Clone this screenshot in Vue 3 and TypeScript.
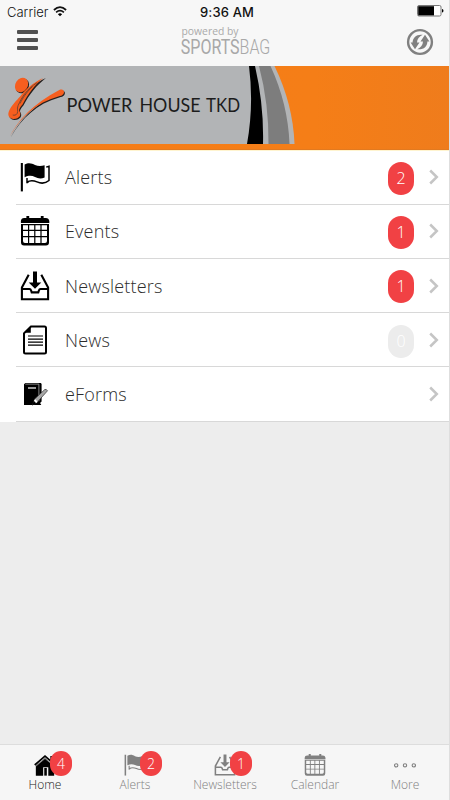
<script setup lang="ts">
interface MenuItem {
  label: string
  icon: string
  count: number | null
}
interface Tab {
  label: string
  icon: string
  count: number
  active?: boolean
}

const menu: MenuItem[] = [
  { label: 'Alerts', icon: 'flag', count: 2 },
  { label: 'Events', icon: 'calendar', count: 1 },
  { label: 'Newsletters', icon: 'inbox', count: 1 },
  { label: 'News', icon: 'page', count: 0 },
  { label: 'eForms', icon: 'form', count: null },
]
const tabs: Tab[] = [
  { label: 'Home', icon: 'home', count: 4, active: true },
  { label: 'Alerts', icon: 'flag', count: 2 },
  { label: 'Newsletters', icon: 'inbox', count: 1 },
  { label: 'Calendar', icon: 'calendar', count: 0 },
  { label: 'More', icon: 'more', count: 0 },
]
</script>

<template>
  <div class="screen">
    <svg class="sprite" width="0" height="0" aria-hidden="true">
      <symbol id="flag" viewBox="0 0 30 30">
        <path d="M.8 1h2.100v28.400H.8z" />
        <path d="M4.600 2.400C9 .1 12 1.500 15 2.900s6 1.500 9.600.3v12.400c-3.600 1.400-6.600 1-9.600-.5S9 13.200 4.600 15.300z" />
        <path d="M26.200 5.100l2.800-.8v14.200c-3.800 3.200-8 3.200-12 1.400-4-1.800-6.500-2-10 .2v-4.200M7 20.800l2-1.600" fill="none" stroke="currentColor" stroke-width="1.500" />
      </symbol>
      <symbol id="calendar" viewBox="0 0 30 30">
        <path d="M6.400 0h2.800v2h11.600V0h2.800v2h2.200q3 0 3.500 3v2H.9V5q.3-3 3.300-3h2.200z" />
        <path fill-rule="evenodd" d="M1 8h28v18.500q0 3-3 3H4q-3 0-3-3zM3 9.300v4.500h5V9.300zm6.200 0v4.500h5V9.300zm6.200 0v4.500h5V9.300zm6.200 0v4.500H27V9.300zM3 15v5h5v-5zm6.200 0v5h5v-5zm6.200 0v5h5v-5zm6.200 0v5H27v-5zM3 21.200V25q0 2 2 2h3v-5.800zm6.200 0V27h5v-5.800zm6.200 0V27h5v-5.800zm6.200 0V27H25q2 0 2-2v-3.800z" />
      </symbol>
      <symbol id="inbox" viewBox="0 0 30 30">
        <path d="M8.700 3.800L1.900 16.400v11.900h26.200V16.400L21.300 3.800M2 18h7.500q1.100 0 1.600 1.500l.6 1.900h6.600l.6-1.900q.5-1.500 1.600-1.500H28" fill="none" stroke="currentColor" stroke-width="2.100" />
        <path d="M13 .6h4v10.800h4.300L15 17.800l-6.300-6.400H13z" />
      </symbol>
      <symbol id="page" viewBox="0 0 30 30">
        <path d="M11 1.500h13.500q1.500 0 1.500 1.500v24q0 1.500-1.500 1.500h-19Q4 28.500 4 27V8.300z" fill="none" stroke="currentColor" stroke-width="2" />
        <path d="M10.800.8v7H3.500zM8 10.400h15v1.200H8zM8 13.500h15v1.200H8zM8 16.500h15v1.200H8zM8 19.500h15v1.200H8z" />
      </symbol>
      <symbol id="form" viewBox="0 0 30 30">
        <path d="M5.400 4h15.400l.8 1v17.500L18 26H4V5.200z" />
        <path d="M5.300 5.100h13.600v17" fill="none" stroke="#aaa" stroke-width=".8" />
        <path d="M8 9h8" stroke="#fff" stroke-width="1.200" />
        <path d="M12.600 25.900l2-5.800L24.800 10.500q1.500-.7 2.700 1.300L17 23.500z" fill="#a6a6a6" stroke="#333" stroke-width=".7" />
        <path d="M12.200 26.400l1.600-4.500 2.400 2.400zM17.500 26l2-3 1.800 3z" />
        <path d="M14 21.500l1.200-1.300 2.400 2.600-1.300 1.200z" fill="#fff" />
      </symbol>
      <symbol id="home" viewBox="0 0 30 30">
        <path d="M2.500 16L15 5.500 27.500 16v13.500h-8V18h-7v11.500h-10z" />
        <path d="M1 15L15 3l14 12M23.500 2.700V10" fill="none" stroke="currentColor" stroke-width="2.400" />
        <path d="M14 19h3.500v10.500H14z" />
        <path d="M3 16.300L15 6.200l12 10.100" fill="none" stroke="#ddd" stroke-width=".7" />
      </symbol>
      <symbol id="more" viewBox="0 0 30 30">
        <g fill="none" stroke="currentColor" stroke-width="1.500"><circle cx="3" cy="15.500" r="2.300" /><circle cx="15" cy="15.500" r="2.300" /><circle cx="27" cy="15.500" r="2.300" /></g>
      </symbol>
      <symbol id="turn" viewBox="0 0 28 28">
        <path d="M4.600 14.600h2C6.700 9.500 10.500 6 16.800 6.800 13 8.600 11.200 11 11 14.600h2.500L9 21.200z" />
      </symbol>
    </svg>

    <header class="top">
      <div class="status">
        <div class="carrier">
          <span>Carrier</span>
          <svg width="14" height="11" viewBox="0 0 14 11"><path d="M.9 4Q7-1.600 13.100 4M3.100 6.300q3.900-3.500 7.800 0" fill="none" stroke="#111" stroke-width="1.700" /><path d="M4.900 8.200q2.100-1.700 4.200 0L7 10.300z" /></svg>
        </div>
        <div class="time">9:36 AM</div>
        <svg class="battery" width="27" height="12" viewBox="0 0 27 12"><rect x=".5" y=".5" width="23.500" height="10.500" rx="1.500" fill="#fff" stroke="#777" /><path d="M1.200 1.200H17v9.200H1.200z" /><path d="M25 4q1.500 0 1.500 1.800T25 7.500z" /></svg>
      </div>
      <div class="nav">
        <button class="burger" aria-label="Menu"><i></i><i></i><i></i></button>
        <svg class="brand" width="92" height="36" viewBox="0 0 92 36">
          <text class="powered" x="1.500" y="10.800" textLength="57" lengthAdjust="spacingAndGlyphs">powered by</text>
          <text class="sports" x=".8" y="29.800" textLength="89.500" lengthAdjust="spacingAndGlyphs">SPORTS<tspan class="bag">BAG</tspan></text>
        </svg>
        <svg class="refresh" width="28" height="28" viewBox="0 0 28 28">
          <circle cx="14" cy="14" r="11.900" fill="none" stroke="#808080" stroke-width="2.400" />
          <use href="#turn" width="28" height="28" />
          <use href="#turn" width="28" height="28" transform="rotate(180 14 14)" />
        </svg>
      </div>
    </header>

    <svg class="banner" width="449" height="84" viewBox="0 0 449 84">
      <defs><linearGradient id="orange" x1="0" x2="1" y1="0" y2="0"><stop offset="0" stop-color="#f57c18" /><stop offset=".7" stop-color="#f57e17" /><stop offset="1" stop-color="#ef7c1c" /></linearGradient></defs>
      <path d="M0 0h449v84H0z" fill="url(#orange)" />
      <path d="M0 0h274.500Q293 38 294.500 78H0z" fill="#b2b4b6" />
      <path d="M249 0h6Q264 39 263 78h-16Q254 39 249 0z" fill="#000" />
      <path d="M259 0h11.500Q288 38 289.500 78h-21Q269 38 259 0z" fill="#7d7d7d" />
      <path d="M0 83h449v1H0z" fill="#e27a20" />
      <g transform="translate(0 -1.500) scale(.98 1)">
        <g fill="#26201e" transform="translate(.9 1)">
          <ellipse cx="22" cy="20.500" rx="6.300" ry="7.700" transform="rotate(35 22 20.500)" />
          <path d="M46 12.500C34 18 27 24 20.500 32c-3 3.300-9 9-11.500 15-1.500 4 .5 7.300 5 7.500 6-.4 8-4 6-7.500-1.300-2 .5-4 3-7C29 29 36 20 46 12.500z" />
          <path d="M10 72c8-16 24-33 50.500-46.500 4-1.500 6 1.700 4.200 4-1.200 1.500-3 2-5.200 2.500C37 38 21 53 10 72z" />
        </g>
        <g fill="#f65e1f">
          <ellipse cx="22" cy="20.500" rx="6.300" ry="7.700" transform="rotate(35 22 20.500)" />
          <path d="M44 13.500C34 18 27 24 20.500 32c-3 3.300-9 9-11.500 15-1.500 4 .5 7.300 5 7.500 6-.4 8-4 6-7.500-1.300-2 .5-4 3-7C29 29 35 21 44 13.500z" />
          <path d="M10 72c8-16 24-33 50.500-46.500 4-1.500 6 1.700 4.200 4-1.200 1.500-3 2-5.200 2.500C37 38 21 53 10 72z" />
        </g>
        <path d="M38 18C27 25 22 33 18.500 41c-1.800 4 .5 5-1 8-1 1.700-3 2-4.500 1.500M33 22c-7 7-10 12-12.500 17" fill="none" stroke="#5e4032" stroke-width=".8" />
      </g>
      <g class="team">
        <text x="66.500" y="46" textLength="66" lengthAdjust="spacingAndGlyphs">POWER</text>
        <text x="139.500" y="46" textLength="61" lengthAdjust="spacingAndGlyphs">HOUSE</text>
        <text x="206" y="46" textLength="34" lengthAdjust="spacingAndGlyphs">TKD</text>
      </g>
    </svg>

    <main class="content">
      <ul class="menu">
        <li v-for="item in menu" :key="item.label" class="row">
          <svg class="row-icon" width="30" height="30"><use :href="'#' + item.icon" /></svg>
          <span class="row-label">{{ item.label }}</span>
          <span v-if="item.count !== null" class="pill" :class="{ empty: item.count === 0 }">{{ item.count }}</span>
          <svg class="chevron" width="10" height="16" viewBox="0 0 10 16"><path d="M1.200 1.500L7.800 8l-6.600 6.500" fill="none" stroke="#c5c5c5" stroke-width="2.500" /></svg>
        </li>
      </ul>
    </main>

    <nav class="tabs">
      <div v-for="tab in tabs" :key="tab.label" class="tab" :class="{ active: tab.active }">
        <div class="tab-icon">
          <svg width="22" height="22"><use :href="'#' + tab.icon" /></svg>
          <span v-if="tab.count" class="badge">{{ tab.count }}</span>
        </div>
        <span class="tab-label">{{ tab.label }}</span>
      </div>
    </nav>
  </div>
</template>

<style>
body { margin: 0; background: #f6f6f6; }
</style>

<style scoped>
* { box-sizing: border-box; }
.screen { width: 450px; height: 800px; display: flex; flex-direction: column; background: #f6f6f6; font-family: "Open Sans", sans-serif; border-right: 1px solid #dedede; overflow: hidden; }
.sprite { position: absolute; }
.top { height: 66px; flex: none; background: #f7f7f7; }
.status { height: 23px; display: grid; grid-template-columns: 1fr auto 1fr; align-items: center; padding: 0 6px 0 7px; font-family: Inter, sans-serif; font-size: 13px; color: #111; }
.carrier { display: flex; align-items: center; gap: 5px; }
.carrier > span { font-weight: 300; }
.carrier svg { margin-bottom: 1px; }
.time { font-weight: 500; font-size: 13px; letter-spacing: .15px; padding-left: 4px; }
.battery { justify-self: end; margin-top: -1px; margin-right: -1px; }
.nav { height: 43px; display: flex; justify-content: space-between; align-items: flex-start; padding: 0 15px 0 17px; }
.burger { width: 21px; padding: 0; margin-top: 7px; border: 0; background: none; display: flex; flex-direction: column; gap: 4px; }
.burger i { height: 4px; background: #505050; border-radius: 1px; }
.brand { margin-left: 8px; margin-top: 1px; overflow: visible; }
.powered { font-size: 11px; fill: #aaa; }
.sports { font-family: Roboto, sans-serif; font-size: 20px; fill: #a8a8a8; }
.bag { font-weight: 300; }
.refresh { margin-top: 5px; fill: #808080; }
.banner { flex: none; display: block; }
.team { font-family: Lato, sans-serif; font-size: 18.500px; fill: #1c1c1c; }
.content { flex: 1; background: #ededed; border-top: 1px solid #fff4cf; border-bottom: 1px solid #ddd; }
.menu { margin: 0; padding: 0; list-style: none; background: #fff; }
.row { height: 54.300px; display: flex; align-items: center; padding: 0 10px 2px 20px; background: linear-gradient(#d8d8d8, #d8d8d8) 16px calc(100% - .7px) / 100% 1px no-repeat; }
.row-icon { color: #000; fill: currentColor; flex: none; }
.row-label { flex: 1; margin-left: 15px; font-size: 18px; font-weight: 300; line-height: 24px; letter-spacing: .18px; color: #2c2c2c; }
.pill { width: 26px; height: 33px; margin-right: 15px; margin-top: 2px; border-radius: 13px; background: #f14144; color: #fff; font-size: 16px; font-weight: 300; line-height: 33px; text-align: center; }
.pill.empty { background: #ececec; color: #fff; }
.tabs { width: 450px; height: 55px; flex: none; display: grid; grid-template-columns: repeat(5, 1fr); background: #f6f6f6; }
.tab { display: flex; flex-direction: column; align-items: center; color: #808080; padding-top: 9px; }
.tab.active { color: #000; }
.tab-icon { position: relative; width: 22px; height: 22px; }
.tab-icon svg { display: block; fill: currentColor; }
.badge { position: absolute; left: 16px; top: -3px; width: 22px; height: 25px; border-radius: 11px; background: #f14144; color: #fff; font-size: 14px; font-weight: 300; line-height: 25px; text-align: center; }
.tab-label { margin-top: 1px; font-size: 12px; line-height: 16px; font-weight: 300; }
.tab.active .tab-label { color: #222; }
</style>
